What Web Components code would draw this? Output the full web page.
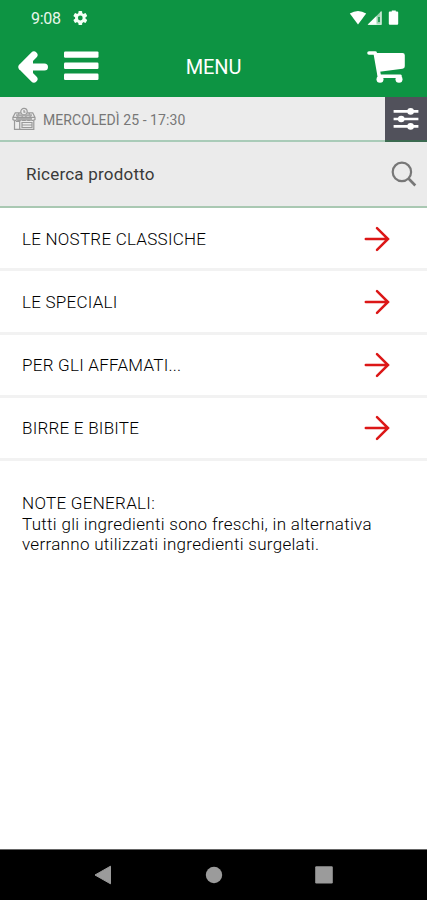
<!DOCTYPE html>
<html lang="it">
<head>
<meta charset="utf-8">
<title>Menu</title>
<style>
html,body{margin:0;padding:0}
body{font-family:Roboto,"Liberation Sans",sans-serif;background:#fff}
</style>
</head>
<body>
<menu-screen></menu-screen>
<script>
const define = (name, markup) => {
  const tpl = document.createElement('template');
  tpl.innerHTML = markup;
  customElements.define(name, class extends HTMLElement {
    constructor() {
      super();
      this.attachShadow({mode: 'open'}).append(tpl.content.cloneNode(true));
    }
  });
};

define('status-bar', `
<style>
:host{display:flex;height:36px;align-items:center;box-sizing:border-box;padding:0 28px 0 31px;color:#e9f7ec;font-size:16px}
.time{flex:none;width:42px;letter-spacing:-.25px}
.grow{flex:1}
svg{display:block;flex:none}
</style>
<span class="time">9:08</span>
<svg width="15" height="16" viewBox="0 0 15 16"><g fill="#f4fff6"><circle cx="7.3" cy="8" r="5.3"/><rect x="5.4" y=".9" width="3.8" height="14.2" rx=".8"/><rect x="5.4" y=".9" width="3.8" height="14.2" rx=".8" transform="rotate(60 7.3 8)"/><rect x="5.4" y=".9" width="3.8" height="14.2" rx=".8" transform="rotate(120 7.3 8)"/></g><circle cx="7.3" cy="8" r="2.4" fill="#0d9443"/></svg>
<span class="grow"></span>
<svg width="50" height="18" viewBox="0 0 50 18"><path d="M.8 4.2Q9 -1 17.2 4.2L9 15.3Z" transform="translate(0 .3)" fill="#fff"/><path d="M18.6 15.8 32.6 1.8V15.8Z" fill="#9bd3ae"/><path d="M18.6 15.8 27.5 6.9V15.8Z" fill="#fff"/><path d="M32 2.8V15.2H19.8" fill="none" stroke="#e6f6eb" stroke-width="1.1"/><path d="M30 8V13" stroke="#0d9443" stroke-width="1.6"/><path d="M40.8 2.6h2V1.5h4v1.1h1.4q1 0 1 1v11.2q0 1-1 1h-7.4q-1 0-1-1V3.6q0-1 1-1z" fill="#fff"/></svg>
`);

define('app-bar', `
<style>
:host{display:grid;grid-template-columns:116px 1fr 116px;height:61px;align-items:center;color:#fff}
.left{display:flex;align-items:center;padding-left:17px;gap:15px}
.right{display:flex;justify-content:flex-end;padding-right:21px}
.title{text-align:center;font-size:20px;letter-spacing:-.1px}
svg{display:block}
</style>
<div class="left">
<svg width="32" height="34" viewBox="0 0 32 34"><path d="M16.9 5 5 17 16.9 29M5 17H27.4" fill="none" stroke="#fff" stroke-width="7.2" stroke-linecap="round" stroke-linejoin="round"/><path d="M5 17 16 7V27Z" fill="#fff"/></svg>
<svg width="35" height="34" viewBox="0 0 35 34" fill="#fff"><rect width="34.5" height="6.4" y="1.4" rx="1.2"/><rect width="34.5" height="6.4" y="12.5" rx="1.2"/><rect width="34.5" height="6.4" y="23.6" rx="1.2"/></svg>
</div>
<div class="title"><slot></slot></div>
<div class="right"><svg width="39" height="34" viewBox="0 0 39 34"><path d="M2 3H8.2L12.2 25.8" fill="none" stroke="#fff" stroke-width="3.6" stroke-linecap="round" stroke-linejoin="round"/><path d="M8 3H35.5Q37.8 3 37.8 5.3V16.3Q37.8 18.4 35.5 18.7L12.5 21.8V24.5H33.5Q35 24.5 34.8 26.2 34.6 27.9 33 27.9H11.2Z" fill="#fff"/><circle cx="13" cy="29.3" r="3.5" fill="#fff"/><circle cx="32" cy="29.3" r="3.5" fill="#fff"/></svg></div>
`);

define('date-bar', `
<style>
:host{display:flex;height:45px;box-sizing:border-box;background:#ececec;color:#777;font-size:14px}
.info{flex:1;display:flex;align-items:center;padding-left:12px;gap:7px;border-bottom:2px solid #a9cbb8;letter-spacing:.07px}
.info span{padding-top:2px}
.filter{width:42px;box-sizing:border-box;border-bottom:2px solid #3b6a50;background:#51515b;display:flex;align-items:center;justify-content:center}
svg{display:block}
</style>
<div class="info">
<svg width="24" height="24" viewBox="0 0 24 24" fill="none" stroke="#999" stroke-width="1.2"><circle cx="12" cy="4.6" r="3.2"/><path d="M8.8 5.8H3.3L.9 10.5V12.5Q2.6 14.3 4.8 12.7 7 14.3 9.3 12.7 12 14.3 14.6 12.7 17 14.3 19 12.7 21.3 14.3 23 12.5V10.5L20.7 5.8H15.2M1 10.3H23M7 6 5 12M17 6 19 12M10.5 8 9.5 12M13.6 8 14.6 12M2.5 14V22.4H21.8V14M3.8 14.5H7.7V22M10 15.5H20V20.5H10ZM10 18H20"/><path d="M12 3V5.2H13.5"/><path d="M4 8.3H20M4 12H20" stroke="#aaa" stroke-width="2"/></svg>
<span><slot></slot></span></div>
<div class="filter"><svg width="26" height="26" viewBox="0 0 26 26" stroke="#fff" stroke-width="2.6" fill="#fff"><path d="M.6 5.4H25.4M.6 13H25.4M.6 20.4H25.4"/><g stroke="none"><circle cx="17.6" cy="5.4" r="3.3"/><circle cx="8.2" cy="13" r="3.3"/><circle cx="17.6" cy="20.4" r="3.3"/></g></svg></div>
`);

define('search-bar', `
<style>
:host{display:flex;height:66px;box-sizing:border-box;align-items:center;justify-content:space-between;padding:0 10px 0 26px;background:#ebebeb;border-bottom:2px solid #a9c8b2;color:#3a3a3a;font-size:17px;letter-spacing:.22px}
svg{display:block}
</style>
<span><slot></slot></span>
<svg width="26" height="26" viewBox="0 0 26 26" fill="none" stroke="#777" stroke-width="2.2"><circle cx="10.9" cy="10.9" r="9.2"/><path d="M17.5 17.5 24.3 24.5" stroke-width="2.6"/></svg>
`);

define('category-row', `
<style>
:host{display:flex;height:63.25px;box-sizing:border-box;align-items:center;justify-content:space-between;padding:1px 37px 0 22px;background:#fff;border-bottom:3px solid #f2f2f2;color:#000;font-size:17px;font-weight:300;letter-spacing:.25px}
svg{display:block}
</style>
<span><slot></slot></span>
<svg width="26" height="26" viewBox="0 0 26 26" fill="none" stroke="#dc1717" stroke-width="2.5" stroke-linecap="round"><path d="M1.8 13H23.5M13 2.2 24 13 13 23.8"/></svg>
`);

define('general-notes', `
<style>
:host{display:block;flex:1;padding:32px 22px 0;color:#000;font-size:17px;font-weight:300;letter-spacing:.3px;line-height:20.6px}
</style>
<slot></slot>
`);

define('nav-bar', `
<style>
:host{display:flex;height:51px;box-sizing:border-box;border-top:1px solid #666;background:#000;align-items:center;padding:0 94px;justify-content:space-between}
svg{display:block}
</style>
<svg width="18" height="20" viewBox="0 0 18 20"><path d="M1 10 16.5 1.2V18.8Z" fill="#9b9b9b" stroke="#9b9b9b" stroke-linejoin="round"/></svg>
<svg width="18" height="20" viewBox="0 0 18 20"><circle cx="9" cy="10" r="8.2" fill="#9b9b9b"/></svg>
<svg width="18" height="20" viewBox="0 0 18 20"><rect x=".2" y="1.2" width="17.6" height="17.2" rx="1.2" fill="#9b9b9b"/></svg>
`);

define('menu-screen', `
<style>
:host{display:flex;flex-direction:column;height:900px;width:427px;overflow:hidden;background:#fff}
header{background:#0d9443}
.note{display:block;width:max-content}
</style>
<header><status-bar></status-bar><app-bar>MENU</app-bar></header>
<date-bar>MERCOLEDÌ 25 - 17:30</date-bar>
<search-bar>Ricerca prodotto</search-bar>
<category-row>LE NOSTRE CLASSICHE</category-row>
<category-row>LE SPECIALI</category-row>
<category-row>PER GLI AFFAMATI...</category-row>
<category-row>BIRRE E BIBITE</category-row>
<general-notes><span class="note">NOTE GENERALI:</span><span class="note">Tutti gli ingredienti sono freschi, in alternativa</span><span class="note">verranno utilizzati ingredienti surgelati.</span></general-notes>
<nav-bar></nav-bar>
`);
</script>
</body>
</html>
